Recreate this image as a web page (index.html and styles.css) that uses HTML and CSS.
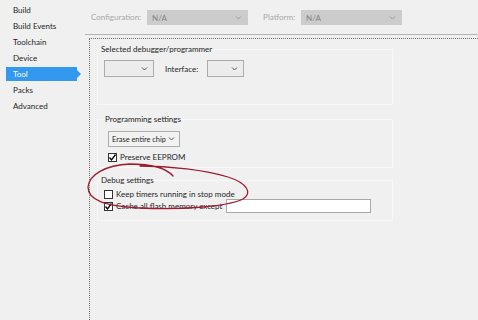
FILE: index.html
```html
<!DOCTYPE html>
<html>
<head>
	<title>Tool settings</title>
	<link rel="stylesheet" href="styles.css">
</head>
<body>
	<div class="window">
		<ul class="nav">
			<li>Build</li>
			<li>Build Events</li>
			<li>Toolchain</li>
			<li>Device</li>
			<li class="active">Tool</li>
			<li>Packs</li>
			<li>Advanced</li>
		</ul>

		<div class="main">
			<div class="toolbar">
				<span class="dim">Configuration:</span>
				<span class="combo combo-off">N/A
					<svg class="chev" width="7" height="4" viewBox="0 0 7 4"><polyline points="1,0.5 3.5,3 6,0.5" fill="none" stroke="#9a9a9a" stroke-width="1"/></svg>
				</span>
				<span class="dim platform">Platform:</span>
				<span class="combo combo-off">N/A
					<svg class="chev" width="7" height="4" viewBox="0 0 7 4"><polyline points="1,0.5 3.5,3 6,0.5" fill="none" stroke="#9a9a9a" stroke-width="1"/></svg>
				</span>
			</div>

			<div class="page">
				<fieldset class="group group-debugger">
					<legend>Selected debugger/programmer</legend>
					<div class="row">
						<span class="combo combo-debugger">
							<svg class="chev" width="7" height="4" viewBox="0 0 7 4"><polyline points="1,0.5 3.5,3 6,0.5" fill="none" stroke="#555" stroke-width="1"/></svg>
						</span>
						<span class="field-label">Interface:</span>
						<span class="combo combo-interface">
							<svg class="chev" width="7" height="4" viewBox="0 0 7 4"><polyline points="1,0.5 3.5,3 6,0.5" fill="none" stroke="#555" stroke-width="1"/></svg>
						</span>
					</div>
				</fieldset>

				<fieldset class="group group-programming">
					<legend>Programming settings</legend>
					<span class="combo combo-erase">Erase entire chip
						<svg class="chev" width="7" height="4" viewBox="0 0 7 4"><polyline points="1,0.5 3.5,3 6,0.5" fill="none" stroke="#555" stroke-width="1"/></svg>
					</span>
					<label class="check">
						<span class="box"><svg width="9" height="9" viewBox="0 0 9 9"><polyline points="1.5,4.5 3.5,7 7.5,1.5" fill="none" stroke="#000" stroke-width="1.3"/></svg></span>
						Preserve EEPROM
					</label>
				</fieldset>

				<fieldset class="group group-debug">
					<legend>Debug settings</legend>
					<label class="check">
						<span class="box"></span>
						Keep timers running in stop mode
					</label>
					<div class="check">
						<span class="box"><svg width="9" height="9" viewBox="0 0 9 9"><polyline points="1.5,4.5 3.5,7 7.5,1.5" fill="none" stroke="#000" stroke-width="1.3"/></svg></span>
						Cache all flash memory except
						<span class="textbox"></span>
					</div>
				</fieldset>

				<!-- red pen mark drawn over the debug group -->
				<svg class="scribble" width="478" height="320" viewBox="0 0 478 320">
					<path d="M173,176 C166,168 150,164 130,164 C105,165 89,175 88,187 C88,200 104,206 140,208 C180,210 226,207 243,199 C253,193 247,183 228,177 C205,170 170,166 140,166" fill="none" stroke="#9b1b30" stroke-width="1.3" stroke-linecap="round"/>
				</svg>
			</div>
		</div>
	</div>
</body>
</html>
```

FILE: styles.css
```css
body {
	margin: 0;
	background-color: #f0f0f0;
	font-family: Lato, "Liberation Sans", sans-serif;
	font-size: 8px;
	color: #1e1e1e;
}

.window {
	display: flex;
	height: 100vh;
	position: relative;
}

.nav {
	list-style: none;
	margin: 0;
	padding: 2px 0 0 0;
	width: 85px;
}

.nav li {
	height: 16px;
	line-height: 16px;
	padding-left: 7px;
	margin-left: 6px;
	width: 64px;
	position: relative;
}

.nav li.active {
	background-color: #3399ee;
	color: #fff;
	height: 14px;
	line-height: 14px;
	margin: 1px 0 1px 6px;
}

.nav li.active::after {
	content: "";
	position: absolute;
	left: 71px;
	top: 3px;
	border-left: 4px solid #3399ee;
	border-top: 4px solid transparent;
	border-bottom: 4px solid transparent;
}

.main {
	flex: 1;
	display: flex;
	flex-direction: column;
}

.toolbar {
	height: 35px;
	box-sizing: border-box;
	padding: 10px 0 0 6px;
	display: flex;
	align-items: flex-start;
	border-bottom: 1px solid #b4b4b4;
}

.dim {
	color: #a6a6a6;
	line-height: 15px;
	margin-right: 6px;
}

.platform {
	margin-left: 15px;
}

.combo {
	display: inline-flex;
	align-items: center;
	justify-content: space-between;
	box-sizing: border-box;
	height: 17px;
	padding: 0 5px 0 6px;
	border: 1px solid #acacac;
	background-color: #ececec;
	white-space: nowrap;
}

.combo-off {
	width: 101px;
	height: 15px;
	border-color: #cccccc;
	background-color: #cccccc;
	color: #808080;
	padding-left: 4px;
}

.page {
	flex: 1;
	margin: 3px 0 0 4px;
	border-top: 1px dotted #6e6e6e;
	border-left: 1px dotted #6e6e6e;
	padding: 5px 0 0 7px;
}

.group {
	width: 296px;
	box-sizing: border-box;
	margin: 0;
	padding: 5px 6px 0 6px;
	border: 1px solid #f8f8f8;
}

.group legend {
	padding: 0;
	margin-left: -3px;
	line-height: 11px;
}

.group-debugger {
	height: 61px;
}

.row {
	display: flex;
	align-items: center;
}

.combo-debugger {
	width: 50px;
	justify-content: flex-end;
}

.field-label {
	margin: 0 9px 0 11px;
}

.combo-interface {
	width: 37px;
	justify-content: flex-end;
}

.group-programming {
	margin-top: 9px;
	height: 54px;
	padding: 6px 6px 0 10px;
}

.combo-erase {
	width: 72px;
	height: 16px;
	padding: 0 4px 0 3px;
	font-size: 7.4px;
	background-color: #f2f2f2;
}

.check {
	display: flex;
	align-items: center;
	height: 12px;
	white-space: nowrap;
}

.group-programming .check {
	margin-top: 4px;
}

.box {
	width: 9px;
	height: 9px;
	box-sizing: border-box;
	border: 1px solid #333;
	background-color: #fff;
	margin-right: 3px;
	display: inline-flex;
}

.box svg {
	margin: -1px;
}

.group-debug {
	margin-top: 7px;
	height: 46px;
	padding: 2px 6px 0 6px;
}

.textbox {
	width: 145px;
	height: 14px;
	box-sizing: border-box;
	border: 1px solid #a9a9a9;
	background-color: #fff;
	margin-left: 4px;
}

.scribble {
	position: absolute;
	left: 0;
	top: 0;
	pointer-events: none;
}
```
